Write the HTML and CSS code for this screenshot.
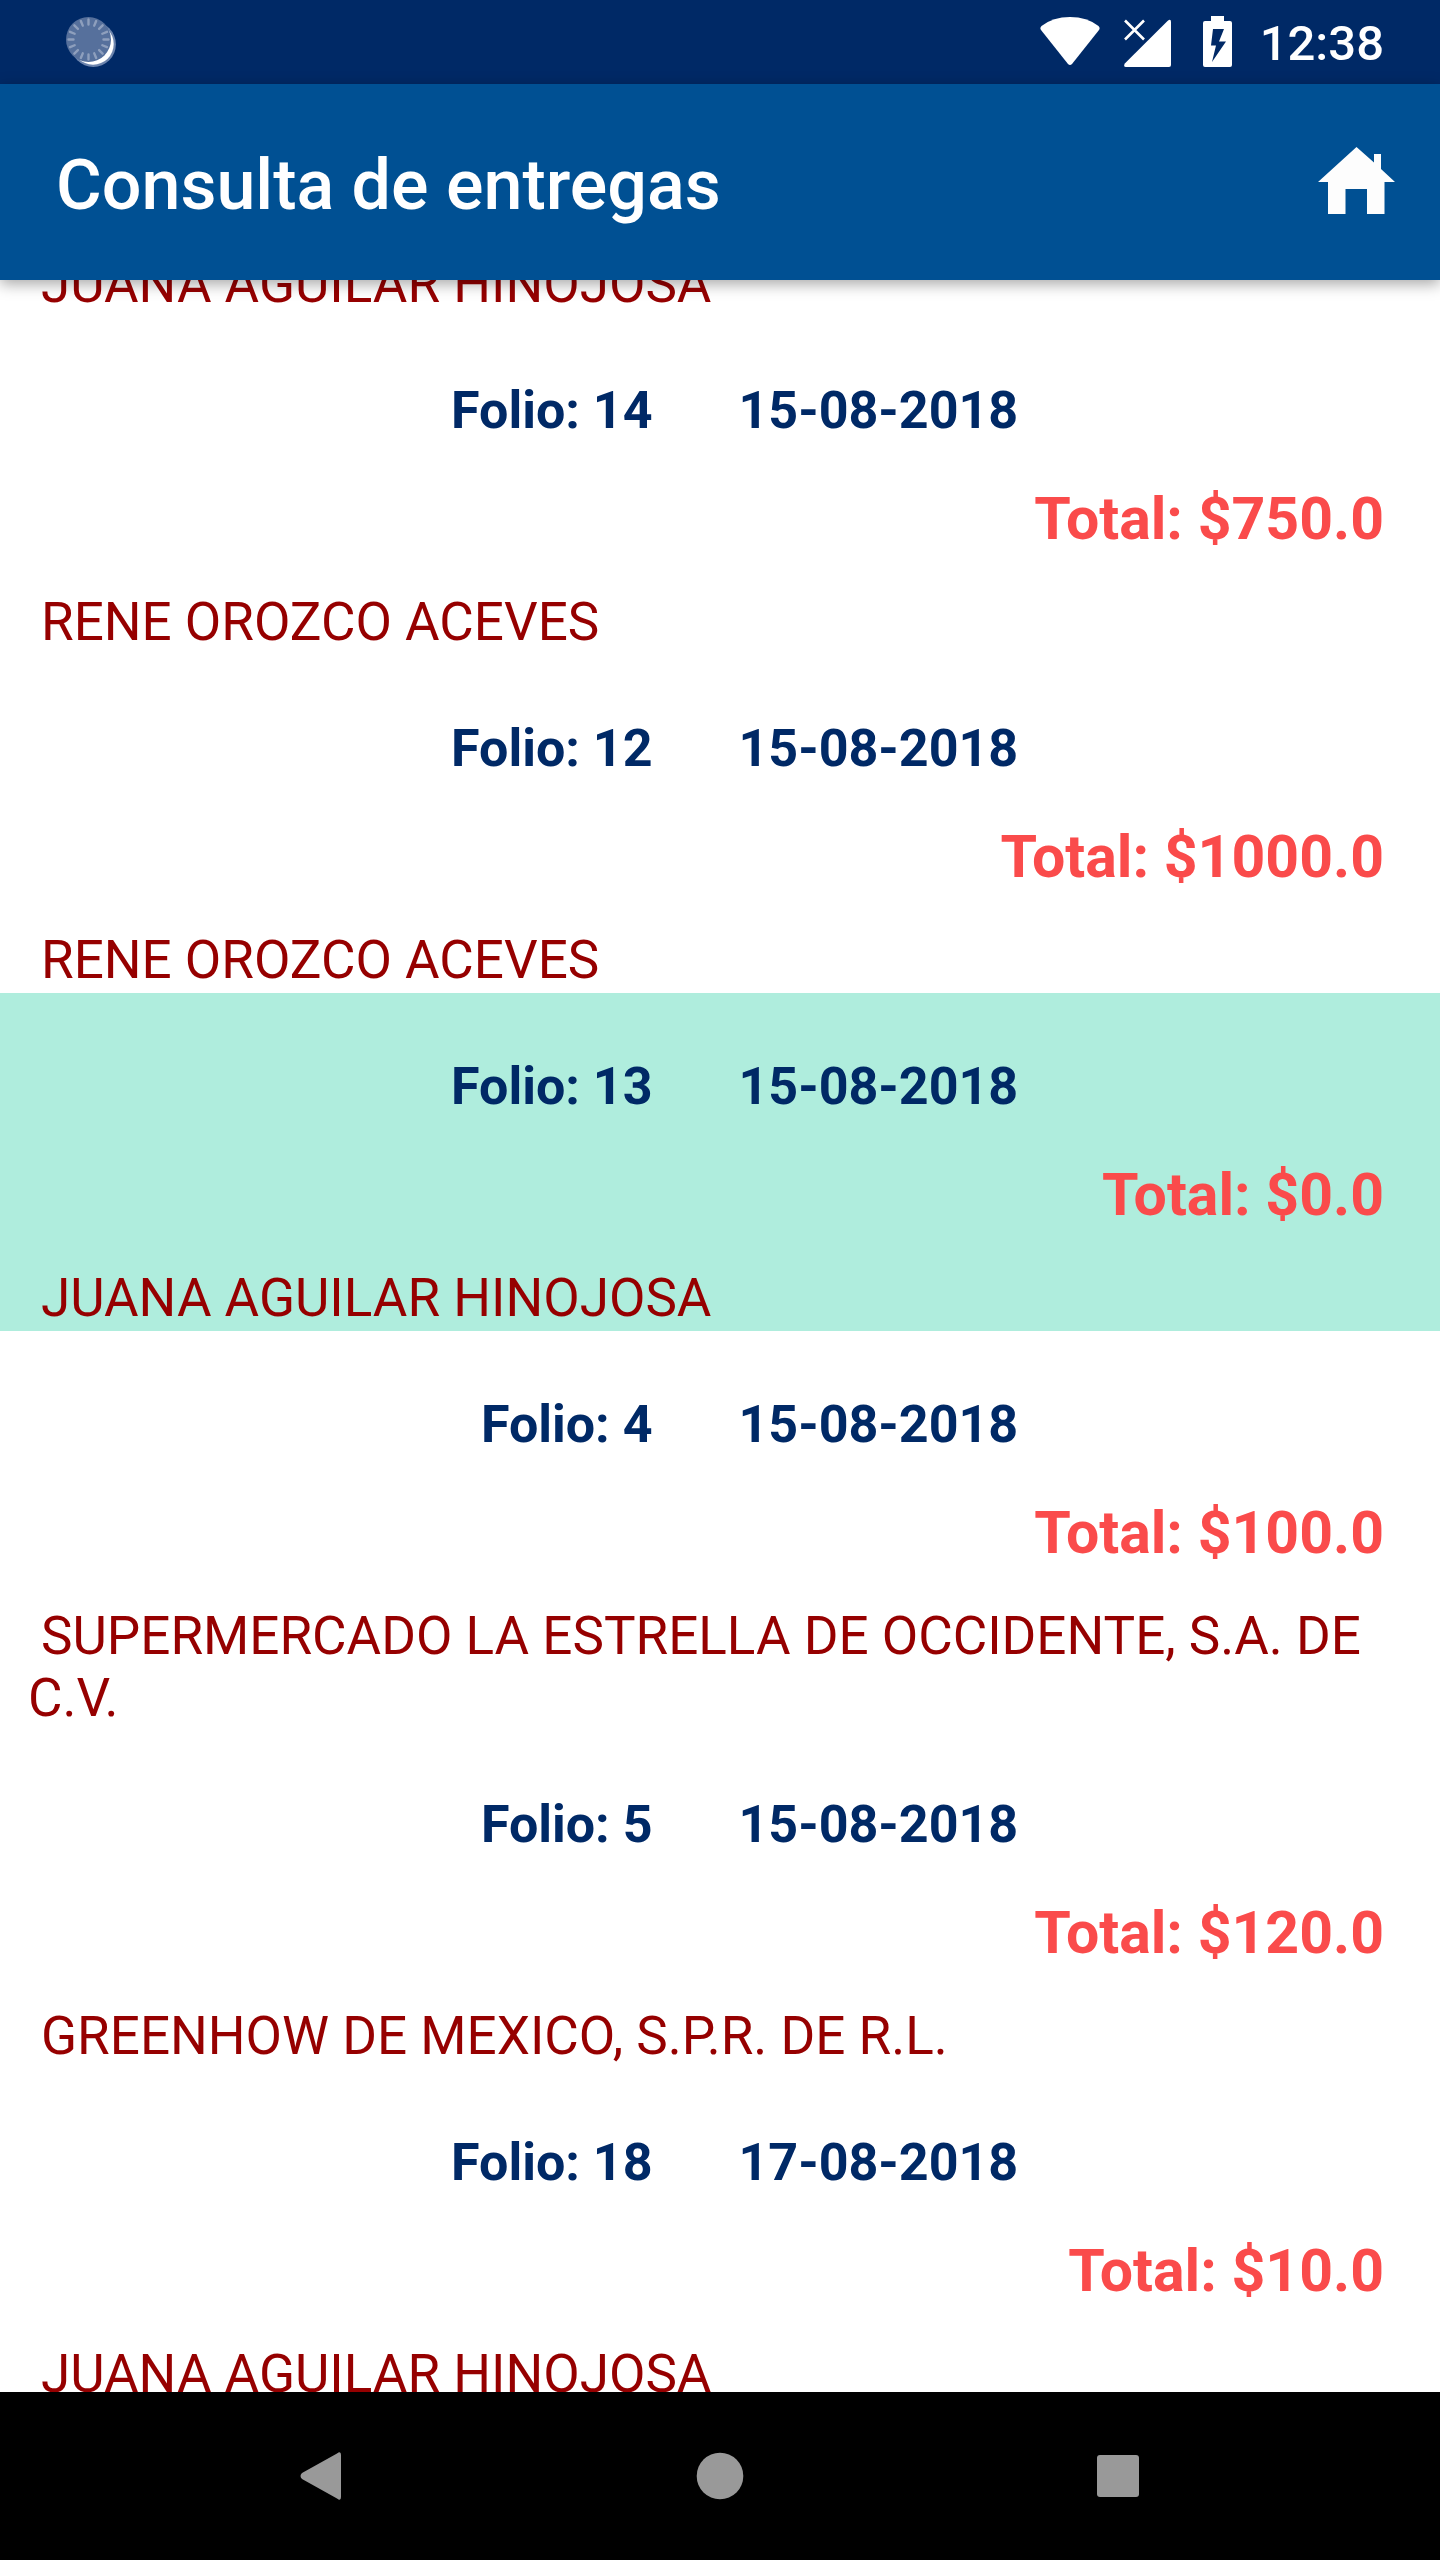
FILE: index.html
```html
<!DOCTYPE html>
<html lang="es">
<head>
<meta charset="utf-8">
<meta name="viewport" content="width=device-width, initial-scale=1">
<title>Consulta de entregas</title>
<link rel="stylesheet" href="styles.css">
</head>
<body>
<div class="status-bar">
  <svg class="icon" width="50" height="50" viewBox="0 0 50 50" aria-hidden="true">
    <circle cx="27.3" cy="27.3" r="22.6" fill="#6c84ad"/>
    <circle cx="27" cy="27" r="20.7" fill="#fff"/>
    <circle cx="22.5" cy="22.5" r="22.5" fill="#56709c"/>
    <g stroke="#8e9fbd" stroke-width="2.4" stroke-linecap="round">
      <path id="tick" d="M22.5 2.5v5M22.5 37.5v5M2.5 22.5h5M37.5 22.5h5"/>
      <use href="#tick" transform="rotate(22.5 22.5 22.5)"/>
      <use href="#tick" transform="rotate(45 22.5 22.5)"/>
      <use href="#tick" transform="rotate(67.5 22.5 22.5)"/>
    </g>
  </svg>
  <div class="status-icons">
    <svg class="icon wifi" width="60" height="52" viewBox="0 0 60 52" aria-hidden="true">
      <path fill="#fff" d="M1 14Q-.5 12 1.500 10Q13 1 30 1T58.500 10Q60.500 12 59 14L32 48Q30 50 28 48Z"/>
    </svg>
    <svg class="icon signal" width="48" height="52" viewBox="0 0 48 52" aria-hidden="true">
      <path fill="#fff" d="M43.500 5Q47 2 47 6V49Q47 51 45 51H2Q-1 51 .8 47.500Z"/>
      <path fill="none" stroke="#fff" stroke-width="2.600" d="M1 4.500 20 23.500M20 4.500 1 23.500"/>
    </svg>
    <svg class="icon battery" width="29" height="52" viewBox="0 0 29 52" aria-hidden="true">
      <path fill="#fff" fill-rule="evenodd" d="M8 0H21V5H27Q29 5 29 7V49Q29 51 27 51H2Q0 51 0 49V7Q0 5 2 5H8ZM10 13 8 29.500H13L9 46 23 25.500H16L21 13Z"/>
    </svg>
    <time class="clock">12:38</time>
  </div>
</div>
<header class="app-bar">
  <h1 class="title">Consulta de entregas</h1>
  <button class="home" type="button" aria-label="Inicio">
    <svg class="icon" width="78" height="70" viewBox="0 0 78 70" aria-hidden="true">
      <path fill="#fdfdfd" d="M38.500 0 56 15.500V7H63V22L77 35H66.500V67H49V42H27.500V67H10V35H0Z"/>
    </svg>
  </button>
</header>
<main class="content">
  <ul class="deliveries">
    <li class="delivery scrolled">
      <p class="customer">JUANA AGUILAR HINOJOSA</p>
    </li>
    <li class="delivery">
      <div class="heading"><span class="folio">Folio: 14</span><span class="date">15-08-2018</span></div>
      <p class="total">Total: $750.0</p>
      <p class="customer">RENE OROZCO ACEVES</p>
    </li>
    <li class="delivery">
      <div class="heading"><span class="folio">Folio: 12</span><span class="date">15-08-2018</span></div>
      <p class="total">Total: $1000.0</p>
      <p class="customer">RENE OROZCO ACEVES</p>
    </li>
    <li class="delivery selected">
      <div class="heading"><span class="folio">Folio: 13</span><span class="date">15-08-2018</span></div>
      <p class="total">Total: $0.0</p>
      <p class="customer">JUANA AGUILAR HINOJOSA</p>
    </li>
    <li class="delivery">
      <div class="heading"><span class="folio">Folio: 4</span><span class="date">15-08-2018</span></div>
      <p class="total">Total: $100.0</p>
      <p class="customer">SUPERMERCADO LA ESTRELLA DE OCCIDENTE, S.A. DE C.V.</p>
    </li>
    <li class="delivery">
      <div class="heading"><span class="folio">Folio: 5</span><span class="date">15-08-2018</span></div>
      <p class="total">Total: $120.0</p>
      <p class="customer">GREENHOW DE MEXICO, S.P.R. DE R.L.</p>
    </li>
    <li class="delivery">
      <div class="heading"><span class="folio">Folio: 18</span><span class="date">17-08-2018</span></div>
      <p class="total">Total: $10.0</p>
      <p class="customer">JUANA AGUILAR HINOJOSA</p>
    </li>
  </ul>
</main>
<nav class="nav-bar">
  <button class="nav-button" type="button" aria-label="Atrás">
    <svg class="icon" width="46" height="48" viewBox="0 0 46 48" aria-hidden="true">
      <path fill="#999" d="M38 1.500Q42 -1.500 42 3V45Q42 49.500 38 46.500L3 27Q0 24 3 21Z"/>
    </svg>
  </button>
  <button class="nav-button" type="button" aria-label="Pantalla principal">
    <svg class="icon" width="48" height="48" viewBox="0 0 48 48" aria-hidden="true">
      <circle cx="24" cy="24" r="23.300" fill="#999"/>
    </svg>
  </button>
  <button class="nav-button" type="button" aria-label="Aplicaciones recientes">
    <svg class="icon" width="48" height="48" viewBox="0 0 48 48" aria-hidden="true">
      <rect x="3" y="3" width="42" height="42" rx="3" fill="#999"/>
    </svg>
  </button>
</nav>
</body>
</html>
```
FILE: styles.css
```css
* {
  box-sizing: border-box;
}

body {
  margin: 0;
  height: 100vh;
  display: flex;
  flex-direction: column;
  overflow: hidden;
  background: #fff;
  font-family: Roboto, "Liberation Sans", sans-serif;
}

h1,
p,
ul {
  margin: 0;
  padding: 0;
}

button {
  padding: 0;
  border: 0;
  background: none;
  cursor: pointer;
}

.icon {
  display: block;
  flex: none;
}

.status-bar {
  flex: none;
  height: 84px;
  padding: 0 56px 0 66px;
  display: flex;
  align-items: center;
  justify-content: space-between;
  background: #002966;
}

.status-icons {
  display: flex;
  align-items: center;
}

.signal {
  margin-left: 24px;
}

.battery {
  margin: 0 28px 0 31px;
}

.clock {
  padding-top: 4px;
  color: #fff;
  font-size: 49px;
  font-weight: 500;
  line-height: 58px;
}

.app-bar {
  position: relative;
  z-index: 1;
  flex: none;
  height: 196px;
  padding: 0 44px 0 56px;
  display: flex;
  align-items: center;
  justify-content: space-between;
  background: #005093;
  box-shadow: 0 4px 14px rgba(0, 0, 0, 0.35);
}

.title {
  padding-top: 6px;
  color: #fff;
  font-size: 70px;
  font-weight: 500;
  line-height: 82px;
}

.content {
  flex: 1;
  min-height: 0;
  overflow: hidden;
}

/* The list is scrolled so that its first row ends just under the app bar. */
.deliveries {
  margin-top: -27px;
  list-style: none;
}

.delivery {
  padding: 63px 0 2px;
  font-size: 53px;
  line-height: 62px;
}

.scrolled {
  padding-top: 0;
}

.selected {
  background: #afeddd;
}

.heading {
  display: grid;
  grid-template-columns: 5fr 6fr;
  color: #002966;
  font-size: 52px;
  font-weight: 700;
}

.folio {
  padding-right: 2px;
  text-align: right;
}

.date {
  padding-left: 84px;
}

.total {
  margin: 42px 56px 37px;
  color: #fa4b4b;
  font-size: 59px;
  font-weight: 700;
  line-height: 70px;
  text-align: right;
}

.customer {
  padding: 0 28px;
  color: #960000;
  text-indent: 13px;
}

.nav-bar {
  flex: none;
  height: 168px;
  display: grid;
  grid-template-columns: repeat(3, 1fr);
  padding: 0 8.5%;
  background: #000;
}

.nav-button {
  display: flex;
  align-items: center;
  justify-content: center;
}
```
